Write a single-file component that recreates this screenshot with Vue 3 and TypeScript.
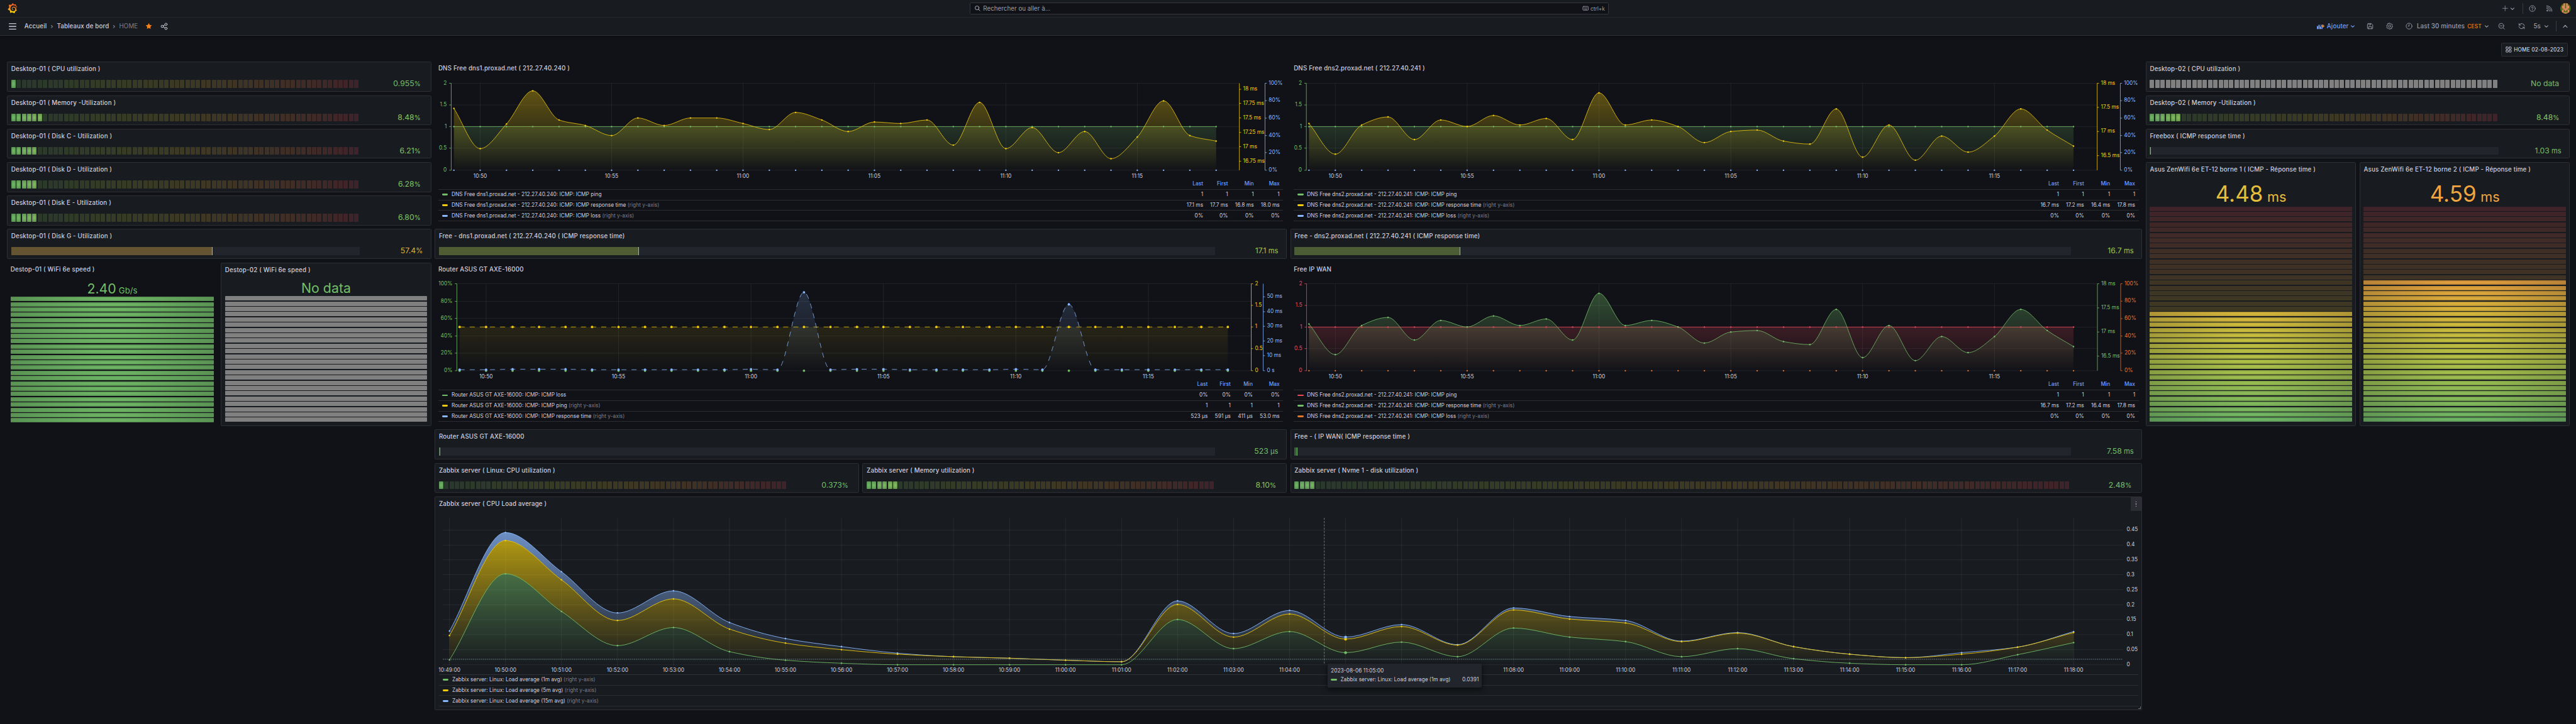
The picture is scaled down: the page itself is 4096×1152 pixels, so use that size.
<script setup lang="ts">
type RGB = [number, number, number]

const GREEN = '#73bf69'
const YELLOW = '#f2cc0c'
const BLUE = '#8ab8ff'
const RED = '#f2495c'
const ORANGE = '#e0752d'

/* Green-yellow-red scale: uniform B-spline through the three stops */
const STOPS: RGB[] = [[115, 191, 105], [250, 222, 42], [242, 73, 92]]
function basis(t: number, a: number, b: number, c: number, d: number) {
  const t2 = t * t
  const t3 = t2 * t
  return ((1 - 3 * t + 3 * t2 - t3) * a + (4 - 6 * t2 + 3 * t3) * b + (1 + 3 * t + 3 * t2 - 3 * t3) * c + t3 * d) / 6
}
function scale(t: number): string {
  const i = t >= 0.5 ? 1 : 0
  const out = [0, 1, 2].map((k) => {
    const v1 = STOPS[i][k]
    const v2 = STOPS[i + 1][k]
    const v0 = i > 0 ? STOPS[i - 1][k] : 2 * v1 - v2
    const v3 = i < 1 ? STOPS[i + 2][k] : 2 * v2 - v1
    return Math.round(Math.max(0, Math.min(255, basis((t - i / 2) * 2, v0, v1, v2, v3))))
  })
  return out.join(',')
}
function cellStyle(i: number, n: number, lit: number, kind?: string) {
  if (kind === 'none') return { background: '#808080' }
  const c = kind === 'flat' ? '115,191,105' : scale(i / (n - 1))
  if (i < lit) return { backgroundImage: `radial-gradient(rgba(${c},.95) 10%, rgba(${c},.66))` }
  return { background: `rgba(${c},.18)` }
}

interface Gauge {
  title: string; col: number; row: number; w: number; h: number
  type: 'lcd' | 'basic' | 'vert'
  n?: number; lit?: number; kind?: string; pct?: number
  value: string; unit?: string; color: string; clear?: boolean; size?: number
}
const gauges: Gauge[] = [
  { title: 'Desktop-01 ( CPU utilization )', col: 0, row: 0, w: 4, h: 2, type: 'lcd', n: 66, lit: 1, value: '0.955', unit: '%', color: '#75c069' },
  { title: 'Desktop-01 ( Memory -Utilization )', col: 0, row: 2, w: 4, h: 2, type: 'lcd', n: 66, lit: 6, value: '8.48', unit: '%', color: '#8ac55e' },
  { title: 'Desktop-01 ( Disk C - Utilization )', col: 0, row: 4, w: 4, h: 2, type: 'lcd', n: 66, lit: 5, value: '6.21', unit: '%', color: '#84c361' },
  { title: 'Desktop-01 ( Disk D - Utilization )', col: 0, row: 6, w: 4, h: 2, type: 'lcd', n: 66, lit: 5, value: '6.28', unit: '%', color: '#84c361' },
  { title: 'Desktop-01 ( Disk E - Utilization )', col: 0, row: 8, w: 4, h: 2, type: 'lcd', n: 66, lit: 5, value: '6.80', unit: '%', color: '#85c460' },
  { title: 'Desktop-01 ( Disk G - Utilization )', col: 0, row: 10, w: 4, h: 2, type: 'basic', pct: 57.7, value: '57.4', unit: '%', color: '#e0ab3d' },
  { title: 'Destop-01 ( WiFi 6e speed )', col: 0, row: 12, w: 2, h: 10, type: 'vert', n: 24, lit: 24, kind: 'flat', value: '2.40', unit: 'Gb/s', color: GREEN, clear: true, size: 30.5 },
  { title: 'Destop-02 ( WiFi 6e speed )', col: 2, row: 12, w: 2, h: 10, type: 'vert', n: 24, lit: 24, kind: 'none', value: 'No data', color: GREEN, size: 30.5 },
  { title: 'Free - dns1.proxad.net ( 212.27.40.240 ( ICMP response time)', col: 4, row: 10, w: 8, h: 2, type: 'basic', pct: 25.8, value: '17.1', unit: ' ms', color: '#a5c644' },
  { title: 'Free - dns2.proxad.net ( 212.27.40.241 ( ICMP response time)', col: 12, row: 10, w: 8, h: 2, type: 'basic', pct: 21.4, value: '16.7', unit: ' ms', color: '#9cc64b' },
  { title: 'Router ASUS GT AXE-16000', col: 4, row: 22, w: 8, h: 2, type: 'basic', pct: 0.17, value: '523', unit: ' µs', color: GREEN },
  { title: 'Free - ( IP WAN( ICMP response time )', col: 12, row: 22, w: 8, h: 2, type: 'basic', pct: 0.42, value: '7.58', unit: ' ms', color: GREEN },
  { title: 'Zabbix server ( Linux: CPU utilization )', col: 4, row: 24, w: 4, h: 2, type: 'lcd', n: 66, lit: 1, value: '0.373', unit: '%', color: '#74bf69' },
  { title: 'Zabbix server ( Memory utilization )', col: 8, row: 24, w: 4, h: 2, type: 'lcd', n: 66, lit: 6, value: '8.10', unit: '%', color: '#89c55e' },
  { title: 'Zabbix server ( Nvme 1 - disk utilization )', col: 12, row: 24, w: 8, h: 2, type: 'lcd', n: 147, lit: 4, value: '2.48', unit: '%', color: '#79c067' },
  { title: 'Desktop-02 ( CPU utilization )', col: 20, row: 0, w: 4, h: 2, type: 'lcd', n: 66, lit: 66, kind: 'none', value: 'No data', color: GREEN },
  { title: 'Desktop-02 ( Memory -Utilization )', col: 20, row: 2, w: 4, h: 2, type: 'lcd', n: 66, lit: 6, value: '8.48', unit: '%', color: '#8ac55e' },
  { title: 'Freebox ( ICMP response time )', col: 20, row: 4, w: 4, h: 2, type: 'basic', pct: 0.1, value: '1.03', unit: ' ms', color: GREEN },
  { title: 'Asus ZenWifi 6e ET-12 borne 1 ( ICMP - Réponse time )', col: 20, row: 6, w: 2, h: 16, type: 'vert', n: 41, lit: 21, value: '4.48', unit: 'ms', color: '#e6be3b', size: 50 },
  { title: 'Asus ZenWifi 6e ET-12 borne 2 ( ICMP - Réponse time )', col: 22, row: 6, w: 2, h: 16, type: 'vert', n: 41, lit: 27, value: '4.59', unit: 'ms', color: '#f2a43f', size: 50 },
]
function place(p: { col: number; row: number; w: number; h: number }) {
  return { gridColumn: `${p.col + 1} / span ${p.w}`, gridRow: `${p.row + 1} / span ${p.h}` }
}

/* ---- curves ---- */
type Pt = [number, number]
type Seg = [Pt, Pt, Pt, Pt]
function segments(p: Pt[]): Seg[] {
  const n = p.length
  const dx: number[] = []
  const ds: number[] = []
  for (let i = 0; i < n - 1; i++) {
    dx.push(p[i + 1][0] - p[i][0])
    ds.push((p[i + 1][1] - p[i][1]) / dx[i])
  }
  const m: number[] = [ds[0]]
  for (let i = 1; i < n - 1; i++) {
    if (ds[i] === 0 || ds[i - 1] === 0 || ds[i] > 0 !== ds[i - 1] > 0) m.push(0)
    else m.push((3 * (dx[i - 1] + dx[i])) / ((2 * dx[i] + dx[i - 1]) / ds[i - 1] + (dx[i] + 2 * dx[i - 1]) / ds[i]))
  }
  m.push(ds[n - 2])
  return dx.map((d, i) => [
    p[i],
    [p[i][0] + d / 3, p[i][1] + (m[i] * d) / 3],
    [p[i + 1][0] - d / 3, p[i + 1][1] - (m[i + 1] * d) / 3],
    p[i + 1],
  ])
}
const f = (p: Pt) => `${p[0].toFixed(2)},${p[1].toFixed(2)}`
function linePath(p: Pt[]) {
  return `M${f(p[0])}` + segments(p).map((s) => `C${f(s[1])} ${f(s[2])} ${f(s[3])}`).join('')
}
function areaPath(p: Pt[], base: number, low?: Pt[]) {
  if (low) {
    const back = segments(low).reverse().map((s) => `C${f(s[2])} ${f(s[1])} ${f(s[0])}`).join('')
    return `${linePath(p)}L${f(low[low.length - 1])}${back}Z`
  }
  return `${linePath(p)}L${f([p[p.length - 1][0], base])}L${f([p[0][0], base])}Z`
}

interface Tick { y: number; t: string }
interface Axis { x: number; color: string; ticks: Tick[]; left?: boolean; bare?: boolean }
interface Series { color: string; line: string; area: string; pts: Pt[]; noLine?: boolean }
interface Row { color: string; name: string; right: boolean; cells: string[] }
interface Chart {
  id: string; title: string; col: number; row: number; w: number; h: number; clear: boolean
  vb: string; height: number; x0: number; x1: number; top: number; bottom: number
  grid: number[]; xt: { x: number; t: string }[]; xy: number; axes: Axis[]; series: Series[]
  alpha: number; r: number; dash?: string; lw: number; head: string[]; rows: Row[]
}
const ticks = (o: number, list: [number, string][]): Tick[] => list.map(([v, t]) => ({ y: o + v / 3, t }))
const times = (x: number, step: number) =>
  ['10:50', '10:55', '11:00', '11:05', '11:10', '11:15'].map((t, i) => ({ x: x + step * (1 + 5 * i), t }))
/* samples are stored in thirds of a unit below the origin o, one per minute */
const pts = (x: number, step: number, o: number, vals: number[]): Pt[] => vals.map((v, i) => [x + i * step, o + v / 3])
const flat = (v: number) => Array.from({ length: 30 }, () => v)
function series(color: string, p: Pt[], base: number, low?: Pt[], noLine?: boolean): Series {
  return { color, pts: p, line: linePath(p), area: noLine ? '' : areaPath(p, base, low), noLine }
}

const dns1 = [316, 556, 409, 211, 385, 418, 478, 373, 418, 373, 373, 406, 442, 340, 385, 454, 397, 406, 385, 535, 280, 556, 430, 580, 454, 616, 487, 271, 478, 511]
const dns2 = [406, 589, 415, 367, 502, 385, 424, 358, 415, 376, 502, 223, 415, 385, 424, 520, 454, 445, 511, 529, 319, 607, 415, 625, 481, 577, 481, 319, 445, 541]
const ping: [number, string][] = [[166, '2'], [295.5, '1.5'], [424.5, '1'], [553, '0.5'], [685, '0']]
const pct: [number, string][] = [[166, '100%'], [270, '80%'], [374, '60%'], [478, '40%'], [580, '20%'], [685, '0%']]
const ms2: [number, string][] = [[166, '18 ms'], [310, '17.5 ms'], [454, '17 ms'], [598, '16.5 ms']]
const head = ['Last', 'First', 'Min', 'Max']
const rows = (base: string, c: string[], v: string[]): Row[] => [
  { color: c[0], name: `${base} ping`, right: false, cells: ['1', '1', '1', '1'] },
  { color: c[1], name: `${base} response time`, right: true, cells: v },
  { color: c[2], name: `${base} loss`, right: true, cells: ['0%', '0%', '0%', '0%'] },
]
function dnsChart(id: string, title: string, col: number, row: number, o: number, x: number, step: number, ax: [number, number, number, number], c: string[], vals: number[], ms: [number, string][], host: string, stat: string[]): Chart {
  const bottom = o + 685 / 3
  return {
    id, title, col, row, w: 8, h: 10, clear: true,
    vb: `${col === 4 ? 871.17 : 2571.5} ${o + 41} 1679.3 204.7`, height: 234,
    x0: ax[0], x1: ax[1], top: o + 166 / 3, bottom, grid: ping.map((p) => o + p[0] / 3),
    xt: times(x, step), xy: o + 243, alpha: 0.38, r: 1.5, lw: 1,
    axes: [
      { x: ax[0], color: c[0], ticks: ticks(o, ping), left: true },
      { x: ax[2], color: c[1], ticks: ticks(o, ms) },
      { x: ax[3], color: c[2], ticks: ticks(o, pct) },
    ],
    series: [
      series(c[0], pts(x, step, o, flat(424.5)), bottom),
      series(c[1], pts(x, step, o, vals), bottom),
      series(c[2], pts(x, step, o, flat(685)), bottom, undefined, true),
    ],
    head, rows: rows(`DNS Free ${host}: ICMP: ICMP`, c, stat),
  }
}
const stat2 = ['16.7 ms', '17.2 ms', '16.4 ms', '17.8 ms']
const spike = flat(646)
;[2, 3, 4, 11, 15, 16, 21].forEach((i) => (spike[i] = 643))
spike[13] = 184
spike[23] = 256

const lx = 892.9
const lstep = 111.34
const g = pts(lx, lstep, 980, [998, 484, 709, 913, 805, 949, 1000, 1018, 1027, 1027, 1027, 1027, 1027, 757, 931, 829, 955, 892, 979, 808, 862, 889, 979, 931, 991, 1018, 1027, 1027, 967, 895])
const y = pts(lx, lstep, 980, [853, 286, 520, 763, 634, 814, 898, 937, 964, 979, 988, 1000, 1009, 667, 862, 724, 874, 799, 910, 700, 754, 778, 889, 838, 919, 964, 985, 964, 922, 835])
const b = pts(lx, lstep, 980, [826, 238, 472, 718, 586, 775, 871, 919, 958, 979, 988, 1000, 1009, 646, 841, 703, 862, 787, 907, 688, 739, 763, 886, 835, 919, 964, 985, 955, 922, 829])
const load: [number, string][] = [[223, '0.45'], [313, '0.4'], [401, '0.35'], [490, '0.3'], [580, '0.25'], [670, '0.2'], [757.5, '0.15'], [847.5, '0.1'], [937, '0.05'], [1027, '0']]
/* labels 16 to 18 sit under the tooltip and stay empty */
const minutes = Array.from({ length: 30 }, (_, i) => {
  const m = 49 + i
  const t = i > 15 && i < 19 ? '' : `${10 + Math.floor(m / 60)}:${String(m % 60).padStart(2, '0')}:00`
  return { x: lx + i * lstep, t }
})

const charts: Chart[] = [
  dnsChart('d1', 'DNS Free dns1.proxad.net ( 212.27.40.240 )', 4, 0, 110, 902.1, 52.24, [896.7, 2463.2, 2463.2, 2514.2], [GREEN, YELLOW, BLUE], dns1,
    [[202, '18 ms'], [286, '17.75 ms'], [373, '17.5 ms'], [459.5, '17.25 ms'], [544.5, '17 ms'], [631, '16.75 ms']],
    'dns1.proxad.net - 212.27.40.240', ['17.1 ms', '17.7 ms', '16.8 ms', '18.0 ms']),
  dnsChart('d2', 'DNS Free dns2.proxad.net ( 212.27.40.241 )', 12, 0, 110, 2601.9, 52.4, [2596.7, 4168.5, 4168.5, 4214.5], [GREEN, YELLOW, BLUE], dns2, ms2, 'dns2.proxad.net - 212.27.40.241', stat2),
  {
    id: 'rt', title: 'Router ASUS GT AXE-16000', col: 4, row: 12, w: 8, h: 10, clear: true,
    vb: '871.17 550 1679.3 204.7', height: 234, x0: 908, x1: 2486.8, top: 564.3, bottom: 737.3,
    grid: [133, 238, 340, 445, 547, 652].map((v) => 520 + v / 3),
    xt: times(913.4, 52.65), xy: 752, alpha: 0.2, r: 2.4, dash: '10.05 10.05', lw: 1,
    axes: [
      { x: 908, color: GREEN, left: true, ticks: ticks(520, [[133, '100%'], [238, '80%'], [340, '60%'], [445, '40%'], [547, '20%'], [652, '0%']]) },
      { x: 2486.8, color: YELLOW, ticks: ticks(520, [[133, '2'], [262, '1.5'], [391, '1'], [520, '0.5'], [652, '0']]) },
      { x: 2510.6, color: BLUE, ticks: ticks(520, [[211, '50 ms'], [300, '40 ms'], [387, '30 ms'], [475, '20 ms'], [562, '10 ms'], [652, '0 s']]) },
    ],
    series: [
      series(GREEN, pts(913.4, 52.65, 520, flat(652)), 737.3, undefined, true),
      series(YELLOW, pts(913.4, 52.65, 520, flat(391)), 737.3),
      series(BLUE, pts(913.4, 52.65, 520, spike), 737.3),
    ],
    head,
    rows: [
      { color: GREEN, name: 'Router ASUS GT AXE-16000: ICMP: ICMP loss', right: false, cells: ['0%', '0%', '0%', '0%'] },
      { color: YELLOW, name: 'Router ASUS GT AXE-16000: ICMP: ICMP ping', right: true, cells: ['1', '1', '1', '1'] },
      { color: BLUE, name: 'Router ASUS GT AXE-16000: ICMP: ICMP response time', right: true, cells: ['523 µs', '591 µs', '411 µs', '53.0 ms'] },
    ],
  },
  dnsChart('wan', 'Free IP WAN', 12, 12, 509, 2601.9, 52.4, [2597.2, 4169, 4169, 4215.2], [RED, GREEN, ORANGE], dns2, ms2, 'dns2.proxad.net - 212.27.40.241', stat2),
  {
    id: 'ld', title: 'Zabbix server ( CPU Load average )', col: 4, row: 26, w: 16, h: 13, clear: false,
    vb: '872.04 1016.4 3377.9 324.4', height: 370.8, x0: 879.7, x1: 4219.7, top: 1030.3, bottom: 1322.3,
    grid: load.map((l) => 980 + l[0] / 3), xt: minutes, xy: 1336.8, alpha: 0.82, r: 1.6, lw: 1.1,
    axes: [{ x: 4219.7, color: '#ccccdc', bare: true, ticks: ticks(980, load) }],
    series: [series(BLUE, b, 1322.3, y), series(YELLOW, y, 1322.3, g), series(GREEN, g, 1322.3)],
    head: [],
    rows: ['1m', '5m', '15m'].map((t, i) => ({ color: [GREEN, YELLOW, BLUE][i], name: `Zabbix server: Linux: Load average (${t} avg)`, right: true, cells: [] })),
  },
]
const hover = [g[16], y[16], b[16]]

const face = ['..#.#..', '..#.#..', '.##.##.', '.##.##.', '..###..', '.#.#.#.', '.#...#.', '..###..']
</script>

<template>
  <div class="screen">
    <header class="bar top">
      <svg class="logo" viewBox="0 0 351 365">
        <defs>
          <linearGradient id="logo" x1="0" y1="1" x2="0" y2="0">
            <stop offset="0" stop-color="#fff100" /><stop offset=".25" stop-color="#fbb016" /><stop offset=".6" stop-color="#f47b20" /><stop offset="1" stop-color="#f05a28" />
          </linearGradient>
        </defs>
        <path fill="url(#logo)" d="M342,161.2c-0.6-6.1-1.6-13.1-3.6-20.9c-2-7.7-5-16.2-9.4-25c-4.4-8.8-10.1-17.9-17.5-26.8c-2.9-3.5-6.1-6.9-9.5-10.2c5.1-20.3-6.2-37.9-6.2-37.9c-19.5-1.2-31.9,6.1-36.5,9.4c-0.8-0.3-1.5-0.7-2.3-1c-3.3-1.3-6.7-2.6-10.3-3.7c-3.5-1.1-7.1-2.1-10.8-3c-3.7-0.9-7.4-1.6-11.2-2.2c-0.7-0.1-1.3-0.2-2-0.3c-8.5-27.2-32.9-38.6-32.9-38.6c-27.3,17.3-32.4,41.5-32.4,41.5s-0.1,0.5-0.3,1.4c-1.5,0.4-3,0.9-4.5,1.3c-2.1,0.6-4.2,1.4-6.2,2.2c-2.1,0.8-4.1,1.6-6.2,2.5c-4.1,1.8-8.2,3.8-12.2,6c-3.9,2.2-7.7,4.6-11.4,7.1c-0.5-0.2-1-0.4-1-0.4c-37.8-14.4-71.3,2.9-71.3,2.9c-3.1,40.2,15.1,65.5,18.7,70.1c-0.9,2.5-1.7,5-2.5,7.5c-2.8,9.1-4.9,18.4-6.2,28.1c-0.2,1.4-0.4,2.8-0.5,4.2C18.8,192.7,8.5,228,8.5,228c29.1,33.5,63.1,35.6,63.1,35.6c0,0,0.1-0.1,0.1-0.1c4.3,7.7,9.3,15,14.9,21.9c2.4,2.9,4.8,5.6,7.4,8.3c-10.6,30.4,1.5,55.6,1.5,55.6c32.4,1.2,53.7-14.2,58.2-17.7c3.2,1.1,6.5,2.1,9.8,2.9c10,2.6,20.2,4.1,30.4,4.5c2.5,0.1,5.1,0.2,7.6,0.1l1.2,0l0.8,0l1.6,0l1.6-0.1l0,0.1c15.3,21.8,42.1,24.9,42.1,24.9c19.1-20.1,20.2-40.1,20.2-44.4l0,0c0,0,0-0.1,0-0.3c0-0.4,0-0.6,0-0.6l0,0c0-0.3,0-0.6,0-0.9c4-2.8,7.8-5.8,11.4-9.1c7.6-6.9,14.3-14.8,19.9-23.3c0.5-0.8,1-1.6,1.5-2.4c21.6,1.2,36.9-13.4,36.9-13.4c-3.6-22.5-16.4-33.5-19.1-35.6l0,0c0,0-0.1-0.1-0.3-0.2c-0.2-0.1-0.2-0.2-0.2-0.2c0,0,0,0,0,0c-0.1-0.1-0.3-0.2-0.5-0.3c0.1-1.4,0.2-2.7,0.3-4.1c0.2-2.4,0.2-4.9,0.2-7.3l0-1.8l0-0.9l0-0.5c0-0.6,0-0.4,0-0.6l-0.1-1.5l-0.1-2c0-0.7-0.1-1.3-0.2-1.9c-0.1-0.6-0.1-1.3-0.2-1.9l-0.2-1.9l-0.3-1.9c-0.4-2.5-0.8-4.9-1.4-7.4c-2.3-9.7-6.1-18.9-11-27.2c-5-8.3-11.2-15.6-18.3-21.8c-7-6.2-14.9-11.2-23.1-14.9c-8.3-3.7-16.9-6.1-25.5-7.2c-4.3-0.6-8.6-0.8-12.9-0.7l-1.6,0l-0.4,0c-0.1,0-0.6,0-0.5,0l-0.7,0l-1.6,0.1c-0.6,0-1.2,0.1-1.7,0.1c-2.2,0.2-4.4,0.5-6.5,0.9c-8.6,1.6-16.7,4.7-23.8,9c-7.1,4.3-13.3,9.6-18.3,15.6c-5,6-8.9,12.7-11.6,19.6c-2.7,6.9-4.2,14.1-4.6,21c-0.1,1.7-0.1,3.5-0.1,5.2c0,0.4,0,0.9,0,1.3l0.1,1.4c0.1,0.8,0.1,1.7,0.2,2.5c0.3,3.5,1,6.9,1.9,10.1c1.9,6.5,4.9,12.4,8.6,17.4c3.7,5,8.2,9.1,12.9,12.4c4.7,3.2,9.8,5.5,14.8,7c5,1.5,10,2.1,14.7,2.1c0.6,0,1.2,0,1.7,0c0.3,0,0.6,0,0.9,0c0.3,0,0.6,0,0.9-0.1c0.5,0,1-0.1,1.5-0.1c0.1,0,0.3,0,0.4-0.1l0.5-0.1c0.3,0,0.6-0.1,0.9-0.1c0.6-0.1,1.1-0.2,1.7-0.3c0.6-0.1,1.1-0.2,1.6-0.4c1.1-0.2,2.1-0.6,3.1-0.9c2-0.7,4-1.5,5.7-2.4c1.8-0.9,3.4-2,5-3c0.4-0.3,0.9-0.6,1.3-1c1.6-1.3,1.9-3.7,0.6-5.3c-1.1-1.4-3.1-1.8-4.7-0.9c-0.4,0.2-0.8,0.4-1.2,0.6c-1.4,0.7-2.8,1.3-4.3,1.8c-1.5,0.5-3.1,0.9-4.7,1.2c-0.8,0.1-1.6,0.2-2.5,0.3c-0.4,0-0.8,0.1-1.3,0.1c-0.4,0-0.9,0-1.2,0c-0.4,0-0.8,0-1.2,0c-0.5,0-1,0-1.5-0.1c-0.6,0-1.2-0.1-1.9-0.2c-3.7-0.5-7.4-1.6-10.9-3.2c-3.6-1.6-7-3.8-10.1-6.6c-3.1-2.8-5.8-6.1-7.9-9.9c-2.1-3.8-3.6-8-4.3-12.4c-0.3-2.2-0.5-4.5-0.4-6.7c0-0.6,0.1-1.2,0.1-1.8c0.1-1.6,0.3-3.2,0.6-5.2c1.7-9.6,6.5-19,13.9-26.1c1.9-1.8,3.9-3.4,6-4.9c2.1-1.5,4.4-2.8,6.8-3.9c2.4-1.1,4.8-2,7.4-2.7c2.5-0.7,5.1-1.1,7.8-1.4c1.3-0.1,2.6-0.2,4-0.2c1.4,0,2.8,0,4.2,0.1c2.9,0.2,5.7,0.6,8.5,1.3c5.6,1.2,11.1,3.3,16.2,6.1c10.2,5.7,18.9,14.5,24.2,25.1c2.7,5.3,4.6,11,5.5,16.9c0.2,1.5,0.4,3,0.5,4.5l0.2,2.2c0,0.8,0,1.5,0,2.2l0,2.1c0,0.7-0.1,1.9-0.1,2.6c-0.1,1.6-0.3,3.3-0.5,4.9c-0.2,1.6-0.5,3.2-0.8,4.8c-0.3,1.6-0.7,3.2-1.1,4.7c-0.8,3.1-1.8,6.2-3,9.3c-2.4,6-5.6,11.8-9.4,17.1c-7.7,10.6-18.2,19.2-30.2,24.7c-6,2.7-12.3,4.7-18.8,5.7c-3.2,0.6-6.5,0.9-9.8,1c-1.6,0-3.2,0-4.9,0c-1.8,0-3.5-0.1-5.3-0.3c-7-0.5-13.9-1.8-20.7-3.7c-6.7-1.9-13.2-4.6-19.4-7.8c-12.3-6.6-23.4-15.6-32-26.5c-4.3-5.4-8.1-11.3-11.2-17.4c-3.1-6.1-5.6-12.6-7.4-19.1c-1.8-6.6-2.9-13.3-3.4-20.1c-0.2-3-0.2-5.9-0.1-8.8c0.1-3.3,0.4-6.8,0.8-10.2c0.4-3.4,1-6.9,1.7-10.3c0.7-3.4,1.5-6.8,2.5-10.2c1.9-6.7,4.3-13.2,7.1-19.3c5.7-12.2,13.1-23.1,22-31.8c2.2-2.2,4.5-4.2,6.9-6.2c2.4-1.9,4.9-3.7,7.5-5.4c2.5-1.7,5.2-3.2,7.9-4.6c1.3-0.7,2.7-1.4,4.1-2c4.2-1.9,8.5-3.6,12.9-4.9c4.4-1.4,8.9-2.5,13.5-3.4c4.6-0.9,9.3-1.5,14-1.9c5.9-0.5,11.8-0.6,17.4-0.4c5.8,0.2,11.5,0.9,17,1.9c11.1,2.1,21.5,5.6,31,10.3c9.5,4.6,17.9,10.3,25.3,16.5c3.5,3,7,6.2,10.2,9.5c3.1,3.3,6,6.6,8.6,10c5.2,6.7,9.4,13.5,12.7,19.9c1.7,3.3,3.2,6.4,4.4,9.4c1.2,3,2.4,5.9,3.3,8.6c1.5,4.4,2.6,8.3,3.5,11.7c0.3,1.4,1.6,2.3,3,2.1c1.5-0.1,2.6-1.3,2.6-2.8C342.6,170.4,342.5,166.1,342,161.2z" />
      </svg>
      <div class="search">
        <svg class="ic" viewBox="0 0 24 24"><circle cx="10.5" cy="10.5" r="7" /><path d="M15.6 15.6 21 21" /></svg>
        <span>Rechercher ou aller à...</span>
        <span class="kbd"><svg class="ic key" viewBox="0 0 24 24"><rect x="2" y="5" width="20" height="14" rx="3" /><path d="M6 10h1M10 10h1M14 10h1M18 10h1M7 15h10" /></svg>ctrl+k</span>
      </div>
      <div class="tools t1">
        <svg class="ic plus" viewBox="0 0 24 24"><path d="M12 3v18M3 12h18" /></svg>
        <svg class="ic chev" viewBox="0 0 24 24"><path d="m6 9.5 6 5.5 6-5.5" /></svg>
        <i class="div"></i>
        <span class="slot help"><svg class="ic" viewBox="0 0 24 24"><circle cx="12" cy="12" r="10" /><path d="M9.3 9.6a2.8 2.8 0 1 1 3.9 2.6c-.8.4-1.2.9-1.2 1.8M12 16.6v.8" /></svg></span>
        <span class="slot rss"><svg class="ic" viewBox="0 0 24 24"><circle cx="5" cy="19" r="2" /><path d="M3 11.5c5 0 9.500 4 9.500 9.500M3 7c7.500 0 14 6 14 14M3 2.800C13 2.800 21 11 21 21" /></svg></span>
        <span class="slot ava">
          <svg class="avatar" viewBox="0 0 24 24">
            <clipPath id="av"><circle cx="12" cy="12" r="12" /></clipPath>
            <g clip-path="url(#av)">
              <rect width="24" height="24" fill="#4f6f12" />
              <template v-for="(r, j) in face" :key="j">
                <template v-for="(c, i) in r.split('')" :key="i">
                  <rect v-if="c === '#'" :x="1.2 + i * 3.1" :y="j * 3" width="3.200" height="3.100" fill="#f58b70" />
                </template>
              </template>
            </g>
          </svg>
        </span>
      </div>
    </header>

    <nav class="bar second">
      <div class="crumbs">
        <svg class="ic burger" viewBox="0 0 24 24"><path d="M2 4.500h20M2 12h20M2 19.500h20" /></svg>
        <span class="c1">Accueil</span><span class="sep">›</span><span>Tableaux de bord</span><span class="sep">›</span><span class="dim">HOME</span>
        <svg class="star" viewBox="0 0 24 24"><path d="m12 1.500 3.200 6.700 7.300 1-5.300 5.100 1.300 7.300L12 18.100l-6.500 3.500 1.300-7.300L1.500 9.200l7.300-1z" /></svg>
        <svg class="ic share" viewBox="0 0 24 24"><circle cx="6" cy="12" r="3.700" /><circle cx="18" cy="5.500" r="3.700" /><circle cx="18" cy="18.500" r="3.700" /><path d="m9.200 10.200 5.600-3M9.200 13.800l5.600 3" /></svg>
      </div>
      <div class="tools t2">
        <svg class="addic" viewBox="0 0 24 18"><path fill="#6e9fff" d="M0 8h4v10H0zM5 4h4v14H5zM10 9h4v9h-4zM15 12h3v6h-3z" /><path fill="#6e9fff" d="M12 4h3v3h-3z" /><path fill="#ff9830" d="M17.500 3h3v3.500H24v3h-3.500V13h-3V9.500H14v-3h3.500z" /></svg>
        <b class="add">Ajouter</b>
        <svg class="ic chev blue" viewBox="0 0 24 24"><path d="m6 9.500 6 5.500 6-5.500" /></svg>
        <span class="slot s1"><svg class="ic" viewBox="0 0 24 24"><path d="M3 5a2 2 0 0 1 2-2h11l5 5v11a2 2 0 0 1-2 2H5a2 2 0 0 1-2-2zM8 3v5h6V3M7 21v-7h10v7" /></svg></span>
        <span class="slot s2"><svg class="ic" viewBox="0 0 24 24"><circle cx="12" cy="12" r="3.800" /><path d="M10 2h4l.6 2.700 2 .9L19 4.200l2.800 2.800-1.500 2.400.8 2 .9.600v3l-2.700.6-.9 2 1.400 2.400L17 21.300l-2.400-1.400-.6 2.100h-4l-.6-2.700-2-.9L5 19.800 2.200 17l1.500-2.400-.8-2L2 12V9.500L4.700 9l.9-2L4.200 4.600 7 2.700l2.400 1.400z" /></svg></span>
        <svg class="ic clock" viewBox="0 0 24 24"><circle cx="12" cy="12" r="10" /><path d="M12 6v6H8.500" /></svg>
        <b class="range">Last 30 minutes</b><span class="tz">CEST</span>
        <svg class="ic chev c3" viewBox="0 0 24 24"><path d="m6 9.500 6 5.500 6-5.500" /></svg>
        <span class="slot s3"><svg class="ic" viewBox="0 0 24 24"><circle cx="11" cy="11" r="8.500" /><path d="M7.500 11h7M17.200 17.200 22 22" /></svg></span>
        <span class="slot s4"><svg class="ic" viewBox="0 0 24 24"><path d="M3 3v5.500h5.500M21 21v-5.500h-5.500M3.600 8.500A9.500 9.500 0 0 1 21.500 11M20.400 15.500A9.500 9.500 0 0 1 2.500 13" /></svg></span>
        <b class="five">5s</b>
        <svg class="ic chev c4" viewBox="0 0 24 24"><path d="m6 9.500 6 5.500 6-5.500" /></svg>
        <i class="div"></i>
        <svg class="ic up" viewBox="0 0 24 24"><path d="m4.500 16 7.500-8 7.500 8" /></svg>
      </div>
    </nav>

    <div class="links">
      <a class="link"><svg class="ic" viewBox="0 0 24 24"><rect x="2" y="2" width="8" height="8" rx="1" /><rect x="14" y="2" width="8" height="8" rx="1" /><rect x="2" y="14" width="8" height="8" rx="1" /><rect x="14" y="14" width="8" height="8" rx="1" /></svg>HOME 02-08-2023</a>
    </div>

    <main class="grid">
      <section v-for="p in gauges" :key="p.title + p.col" class="panel" :class="{ clear: p.clear }" :style="place(p)">
        <h2>{{ p.title }}</h2>
        <div v-if="p.type === 'vert'" class="vert">
          <div class="big" :style="{ color: p.color, fontSize: p.size + 'px' }">{{ p.value }}<small v-if="p.unit">{{ p.unit }}</small></div>
          <div class="stack"><i v-for="i in p.n" :key="i" :style="cellStyle(p.n! - i, p.n!, p.lit!, p.kind)"></i></div>
        </div>
        <div v-else class="hor">
          <div v-if="p.type === 'lcd'" class="cells"><i v-for="i in p.n" :key="i" :style="cellStyle(i - 1, p.n!, p.lit!, p.kind)"></i></div>
          <div v-else class="track"><div class="fill" :style="{ width: p.pct + '%', color: p.color }"></div></div>
          <div class="val" :class="p.type" :style="{ color: p.color }">{{ p.value }}<small v-if="p.unit">{{ p.unit }}</small></div>
        </div>
      </section>

      <section v-for="c in charts" :key="c.id" class="panel" :class="{ clear: c.clear }" :style="place(c)">
        <h2>{{ c.title }}</h2>
        <div v-if="!c.clear" class="menu"><i></i><i></i><i></i></div>
        <svg class="plot" :viewBox="c.vb" :style="{ height: c.height + 'px' }" preserveAspectRatio="xMinYMin meet">
          <defs>
            <linearGradient v-for="(s, i) in c.series" :id="c.id + i" :key="i" gradientUnits="userSpaceOnUse" x1="0" x2="0" :y1="c.top" :y2="c.bottom">
              <stop offset="0" :stop-color="s.color" :stop-opacity="c.alpha" />
              <stop offset="1" :stop-color="s.color" stop-opacity="0" />
            </linearGradient>
          </defs>
          <g class="gl">
            <path v-for="v in c.grid" :key="v" :d="`M${c.x0} ${v}H${c.x1}`" />
            <path v-for="t in c.xt" :key="t.x" :d="`M${t.x} ${c.top}V${c.bottom + 2.5}`" />
          </g>
          <g class="xt"><text v-for="t in c.xt.filter((l) => l.t)" :key="t.x" :x="t.x" :y="c.xy">{{ t.t }}</text></g>
          <g v-for="(a, i) in c.axes" :key="i" :fill="a.color" :stroke="a.color">
            <path v-if="!a.bare" :d="`M${a.x} ${c.top}V${c.bottom}`" />
            <template v-for="t in a.ticks" :key="t.t">
              <path v-if="!a.bare" :d="`M${a.x} ${t.y}h${a.left ? -4 : 3.5}`" />
              <text stroke="none" :x="a.x + (a.left ? -8.8 : 7.4)" :y="t.y + 2.700" :text-anchor="a.left ? 'end' : 'start'">{{ t.t }}</text>
            </template>
          </g>
          <g v-for="(s, i) in c.series" :key="i">
            <path v-if="!s.noLine" :d="s.area" :fill="`url(#${c.id + i})`" />
            <path v-if="!s.noLine" :d="s.line" fill="none" :stroke="s.color" :stroke-width="c.lw" :stroke-dasharray="c.dash" />
          </g>
          <g v-for="(s, i) in c.series" :key="'p' + i" :fill="s.color">
            <circle v-for="(p, k) in s.pts" :key="k" :cx="p[0]" :cy="p[1]" :r="c.r" />
          </g>
          <g v-if="!c.clear">
            <path class="cross" d="M879.700 1311.400H4219.700" stroke-dasharray="2.500 1.500" />
            <path class="cross" d="M2632 1030V1322" stroke-dasharray="4 2.500" />
            <circle v-for="(p, k) in hover" :key="k" :cx="p[0]" :cy="p[1]" r="2.800" :fill="[GREEN, YELLOW, BLUE][k]" />
          </g>
        </svg>
        <table class="legend" :class="{ bare: !c.head.length }">
          <thead v-if="c.head.length"><tr><th class="name"></th><th v-for="h in c.head" :key="h">{{ h }}</th></tr></thead>
          <tbody>
            <tr v-for="r in c.rows" :key="r.name">
              <td class="name"><i :style="{ background: r.color }"></i>{{ r.name }}<em v-if="r.right"> (right y-axis)</em></td>
              <td v-for="(v, k) in r.cells" :key="k">{{ v }}</td>
            </tr>
          </tbody>
        </table>
        <div v-if="!c.clear" class="tip">
          <div>2023-08-06 11:05:00</div>
          <div class="trow"><i></i><span>Zabbix server: Linux: Load average (1m avg)</span><span class="tv">0.0391</span></div>
        </div>
        <i v-if="!c.clear" class="corner"></i>
      </section>
    </main>
  </div>
</template>

<style>
html, body { margin: 0; background: #111217; overflow: hidden; }
</style>

<style scoped>
.screen {
  zoom: 0.7;
  width: 5851.4px;
  height: 1645.7px;
  overflow: hidden;
  background: #111217;
  color: #ccccdc;
  font-family: Inter, Roboto, sans-serif;
  font-size: 14px;
  letter-spacing: 0.01071em;
}
.screen * { box-sizing: border-box; }
.bar {
  display: flex;
  align-items: center;
  justify-content: space-between;
  background: #181b1f;
  border-bottom: 1px solid #2d2f34;
}
.top { height: 40px; }
.second { height: 41px; box-shadow: 0 2px 6px rgba(0, 0, 0, 0.6); }
.ic {
  width: 16px;
  height: 16px;
  flex: none;
  fill: none;
  stroke: currentColor;
  stroke-width: 2;
  stroke-linecap: round;
  stroke-linejoin: round;
}
.logo { width: 22px; height: 23px; margin-left: 17px; flex: none; }
.search {
  display: flex;
  align-items: center;
  width: 1452px;
  height: 28px;
  margin-left: 2164px;
  padding: 0 8px;
  background: #111217;
  border: 1px solid #34363c;
  border-radius: 2px;
  color: #9a9ba7;
  letter-spacing: 0;
}
.search > .ic { width: 15px; height: 15px; margin-right: 6px; color: #c4c5d2; }
.kbd { display: flex; align-items: center; gap: 4px; margin-left: auto; font-size: 12px; }
.key { width: 15px; height: 15px; }
.tools { display: flex; align-items: center; color: #9b9ca8; }
.t1 { margin-left: auto; padding-right: 3px; }
.plus { width: 15px; height: 15px; stroke-width: 1.800; }
.chev { width: 14px; height: 14px; margin-left: 2px; stroke-width: 3; }
.div { width: 1px; height: 24px; background: #3a3c42; }
.t1 .div { margin-left: 15px; }
.slot { display: flex; justify-content: center; flex: none; }
.help { width: 43px; }
.rss { width: 35px; }
.ava { width: 40px; }
.avatar { width: 24px; height: 24px; }
.crumbs { display: flex; align-items: center; padding-left: 18px; font-weight: 500; }
.burger { width: 20px; height: 20px; stroke-width: 2.400; stroke-linecap: butt; }
.c1 { margin-left: 17.500px; }
.sep { width: 23px; text-align: center; color: #9596a2; }
.dim { color: #7d7e89; font-weight: 400; }
.star { width: 16px; height: 16px; margin-left: 17px; fill: #f5821f; }
.share { margin-left: 18px; width: 17px; height: 17px; }
.t2 { padding-right: 17px; font-weight: 500; }
.t2 b { font-weight: 500; }
.addic { width: 17px; height: 14px; }
.add { margin-left: 6px; color: #6e9fff; }
.blue { color: #6e9fff; }
.s1 { width: 48px; margin-left: 9px; }
.s2 { width: 41px; }
.clock { margin-left: 16px; }
.range { margin-left: 9px; }
.tz { margin-left: 6px; font-size: 12px; color: #ff780a; }
.c3 { margin-left: 5px; }
.s3 { width: 44px; margin-left: 5px; }
.s4 { width: 45px; }
.five { margin-left: 5px; }
.c4 { margin-left: 5px; }
.t2 .div { margin-left: 15px; }
.up { width: 14px; height: 14px; margin-left: 14px; stroke-width: 2.800; }
.links { display: flex; justify-content: flex-end; padding: 15.500px 18px 0 0; height: 59.600px; }
.link {
  display: flex;
  align-items: center;
  height: 32px;
  padding: 0 9px;
  gap: 5px;
  background: #181b1f;
  border: 1px solid #2d2f34;
  border-radius: 2px;
  font-size: 12px;
  font-weight: 500;
}
.link .ic { width: 14px; height: 14px; stroke-width: 2.200; }
.grid {
  display: grid;
  grid-template-columns: repeat(24, minmax(0, 1fr));
  grid-auto-rows: 30px;
  gap: 8px;
  width: 5821.700px;
  margin-left: 16px;
}
.panel {
  position: relative;
  min-width: 0;
  min-height: 0;
  display: flex;
  flex-direction: column;
  padding: 0 8px 8px;
  background: #181b1f;
  border: 1px solid #2d2f34;
  border-radius: 2px;
}
.clear { background: none; border: 0; }
h2 {
  flex: none;
  height: 32px;
  margin: 0;
  font-size: 14px;
  line-height: 32px;
  font-weight: 500;
  letter-spacing: 0.015em;
  white-space: nowrap;
}
.hor { display: flex; align-items: center; flex: none; height: 18px; margin-top: 8px; }
.cells { flex: 1; display: flex; height: 18px; }
.cells i { flex: 1; margin-right: 2px; border-radius: 1px; }
.track { flex: 1; height: 18px; background: #22252b; border-radius: 1px; }
.fill { position: relative; height: 18px; min-width: 2px; border-right: 1px solid; }
.fill::before { content: ''; display: block; height: 100%; background: currentColor; opacity: 0.35; }
.val { flex: none; width: 153px; padding-right: 10px; text-align: right; font-size: 17.500px; line-height: 18px; letter-spacing: 0; white-space: pre; }
.val.lcd { padding-right: 15px; }
.val small { font-size: 14.500px; }
.basic small { font-size: 16px; }
.vert { flex: 1; display: flex; flex-direction: column; justify-content: flex-end; min-height: 0; }
.big { text-align: center; line-height: 1.2; letter-spacing: 0; }
.big small { font-size: 0.62em; margin-left: 0.3em; }
.stack { display: flex; flex-direction: column; gap: 2px; }
.stack i { height: 10px; border-radius: 1px; }
.plot { display: block; width: 100%; flex: none; overflow: visible; font-size: 10.500px; letter-spacing: 0; }
.gl { stroke: rgba(240, 250, 255, 0.09); fill: none; }
.xt { text-anchor: middle; fill: #ccccdc; }
.cross { stroke: #78909c; fill: none; }
.legend { width: 100%; flex: none; border-collapse: collapse; font-size: 12px; letter-spacing: 0; white-space: nowrap; }
.legend th, .legend td { height: 24px; padding: 0 8px; text-align: right; border-bottom: 1px solid #2b2d31; line-height: 16px; }
.legend th { color: #6e9fff; font-weight: 500; }
.legend .name { width: 100%; text-align: left; }
.bare { border-top: 1px solid #2f3236; }
.legend i { display: inline-block; width: 14px; height: 4px; margin-right: 8px; border-radius: 2px; vertical-align: middle; }
.legend em { font-style: normal; color: #7b7c87; }
.menu {
  position: absolute;
  top: 0;
  right: 0;
  width: 25px;
  height: 32px;
  display: flex;
  flex-direction: column;
  align-items: center;
  justify-content: center;
  gap: 3px;
  background: #2b2d33;
}
.menu i { width: 2px; height: 2px; background: #ccccdc; }
.corner {
  position: absolute;
  right: 2px;
  bottom: 2px;
  width: 5px;
  height: 5px;
  border-right: 1.500px solid #6d6f78;
  border-bottom: 1.500px solid #6d6f78;
}
.tip {
  position: absolute;
  left: 2027px;
  top: 378.500px;
  width: 350px;
  height: 54px;
  padding: 8px 7px;
  background: #22252b;
  border-radius: 2px;
  box-shadow: 0 4px 12px rgba(0, 0, 0, 0.6);
  font-size: 12px;
  line-height: 18px;
  letter-spacing: 0;
  white-space: nowrap;
}
.trow { display: flex; align-items: center; margin-top: 2px; }
.trow i { width: 14px; height: 4px; margin-right: 8px; border-radius: 2px; background: #73bf69; }
.tv { margin-left: auto; }
</style>
